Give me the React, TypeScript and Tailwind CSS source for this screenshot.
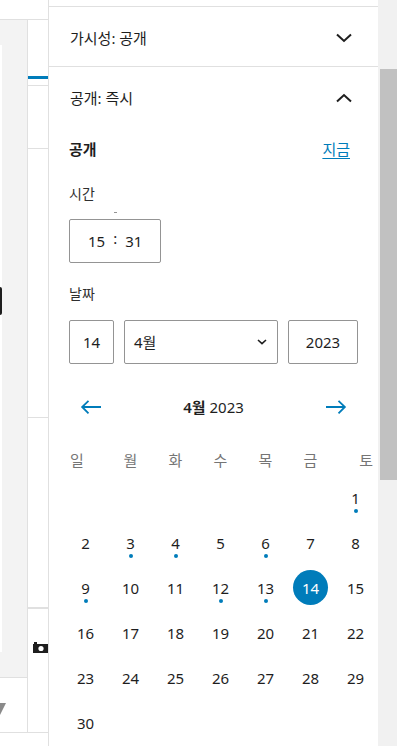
import React from 'react'

const FONT = { fontFamily: '"Noto Sans", "Noto Sans CJK KR", sans-serif' }

const WEEKDAYS = ['일', '월', '화', '수', '목', '금', '토']
const DOTS = [1, 3, 4, 6, 9, 12, 13]
const SELECTED = 14

function Chevron({ up = false }: { up?: boolean }) {
  return (
    <svg width="16" height="10" viewBox="0 0 16 10" className="text-[#1e1e1e]">
      <polyline
        points={up ? '1,8.5 8,2 15,8.5' : '1,1.5 8,8 15,1.5'}
        fill="none"
        stroke="currentColor"
        strokeWidth="2"
      />
    </svg>
  )
}

function LeftStrip() {
  return (
    <div className="w-[49px] shrink-0 flex flex-col border-r border-[#e0e0e0]">
      <div className="h-[20px] border-b border-[#e0e0e0]" />
      <div className="flex h-[713px] border-b border-[#e0e0e0]">
        {/* gray column */}
        <div className="w-[28px] border-r border-[#e0e0e0] flex flex-col">
          <div className="h-[658px] bg-[#f3f3f3] border-b border-[#e0e0e0] pt-[25px]">
            <div className="w-[2px] h-[607px] bg-white pt-[242px]">
              <div className="w-[2px] h-[28px] bg-[#1e1e1e] rounded-r-[2px]" />
            </div>
          </div>
          <div className="pt-[25px]">
            <svg width="6" height="14" viewBox="0 0 6 14">
              <polygon points="0,0 6,0 0,12" fill="#8a8a8a" />
            </svg>
          </div>
        </div>
        {/* white column */}
        <div className="flex-1 flex flex-col">
          <div className="h-[56px]" />
          <div className="h-[3px] bg-[#007cba]" />
          <div className="h-[7px] border-b border-[#e0e0e0]" />
          <div className="h-[63px] border-b border-[#e0e0e0]" />
          <div className="h-[269px] border-b border-[#e0e0e0]" />
          <div className="h-[191px] border-b-2 border-[#e0e0e0]" />
          <div className="pt-[33px] pl-[5px]">
            <svg width="15" height="11" viewBox="0 0 15 11">
              <rect x="0" y="2" width="15" height="9" fill="#1e1e1e" />
              <rect x="1" y="0" width="3" height="2" fill="#1e1e1e" />
              <circle cx="8" cy="6.5" r="2.6" fill="#fff" />
            </svg>
          </div>
        </div>
      </div>
    </div>
  )
}

function Calendar() {
  const cells: (number | null)[] = [...Array(6).fill(null), ...Array.from({ length: 30 }, (_, i) => i + 1)]
  return (
    <div className="-ml-[6px] w-[315px]">
      <div className="grid grid-cols-7 h-[39px] text-[15px] text-[#757575]">
        {WEEKDAYS.map((d, i) => (
          <div
            key={d}
            className={`pt-[13px] leading-[20px] ${
              i === 0 ? 'text-left pl-[7px]' : i === 6 ? 'text-right pr-[5px]' : 'text-center'
            }`}
          >
            {d}
          </div>
        ))}
      </div>
      <div className="grid grid-cols-7">
        {cells.map((n, i) => (
          <div key={i} className="h-[45px] flex flex-col items-center pt-[12px]">
            {n !== null && (
              <>
                {n === SELECTED ? (
                  <div className="-mt-[8px] w-[35px] h-[35px] rounded-full bg-[#007cba] text-white flex items-center justify-center text-[15px] leading-[20px]">
                    {n}
                  </div>
                ) : (
                  <div className="text-[15px] leading-[20px] text-[#1e1e1e]">{n}</div>
                )}
                {DOTS.includes(n) && <div className="mt-[1px] w-[4px] h-[4px] rounded-full bg-[#007cba]" />}
              </>
            )}
          </div>
        ))}
      </div>
    </div>
  )
}

export default function App() {
  return (
    <div className="w-[397px] h-[746px] overflow-hidden bg-white flex text-[#1e1e1e]" style={FONT}>
      <LeftStrip />

      {/* Sidebar panel */}
      <div className="w-[329px] shrink-0 flex flex-col">
        <div className="h-[7px] border-b border-[#e0e0e0]" />

        <div className="h-[62px] border-b border-[#e0e0e0] flex items-center justify-between pt-[4px] pl-[21px] pr-[26px]">
          <span className="text-[15px]">가시성: 공개</span>
          <Chevron />
        </div>

        <div className="h-[62px] flex items-center justify-between pt-[2px] pl-[21px] pr-[26px]">
          <span className="text-[15px]">공개: 즉시</span>
          <Chevron up />
        </div>

        <div className="pl-[20px] pr-[20px]">
          <div className="h-[44px] flex items-center justify-between">
            <span className="text-[15px] font-semibold">공개</span>
            <button className="mr-[8px] text-[15px] text-[#007cba] underline underline-offset-[3px]">지금</button>
          </div>

          <div className="mt-[13px] h-[20px] leading-[20px] text-[14px] text-[#2f2f2f]">시간</div>

          <div className="mt-[8px] ml-[45px] w-[3px] h-[1px] bg-[#949494]" />
          <div className="mt-[6px] w-[92px] h-[44px] border border-[#949494] rounded-[2px] flex items-center pl-[18px] text-[15px]">
            <span>15</span>
            <span className="mx-[8px] -mt-[6px]">:</span>
            <span>31</span>
          </div>

          <div className="mt-[21px] h-[20px] leading-[20px] text-[14px] text-[#2f2f2f]">날짜</div>

          <div className="mt-[16px] flex gap-[10px] h-[44px] text-[15px]">
            <div className="w-[45px] border border-[#949494] rounded-[2px] flex items-center justify-center">14</div>
            <div className="w-[154px] border border-[#949494] rounded-[2px] flex items-center justify-between pl-[9px] pr-[10px]">
              <span>4월</span>
              <svg width="10" height="6" viewBox="0 0 10 6">
                <polyline points="1,1 5,4.6 9,1" fill="none" stroke="#1e1e1e" strokeWidth="1.6" />
              </svg>
            </div>
            <div className="w-[70px] border border-[#949494] rounded-[2px] flex items-center justify-center">2023</div>
          </div>

          <div className="mt-[23px] h-[40px] flex items-center justify-between">
            <button className="w-[44px] flex items-center justify-center text-[#007cba]">
              <svg width="30" height="30" viewBox="0 0 24 24" fill="currentColor">
                <path d="M20 11.2H6.8l3.7-3.7-1-1L3.9 12l5.6 5.5 1-1-3.7-3.7H20z" />
              </svg>
            </button>
            <div className="text-[15px]">
              <span className="font-semibold">4월</span> 2023
            </div>
            <button className="w-[44px] flex items-center justify-center text-[#007cba]">
              <svg width="30" height="30" viewBox="0 0 24 24" fill="currentColor">
                <path d="m14.5 6.5-1 1 3.7 3.7H4v1.6h13.2l-3.7 3.7 1 1 5.6-5.5z" />
              </svg>
            </button>
          </div>

          <div className="mt-[10px]">
            <Calendar />
          </div>
        </div>
      </div>

      {/* Scrollbar */}
      <div className="flex-1 bg-[#f1f1f1] pl-[2px] pt-[69px]">
        <div className="h-[411px] bg-[#c1c1c1]" />
      </div>
    </div>
  )
}
